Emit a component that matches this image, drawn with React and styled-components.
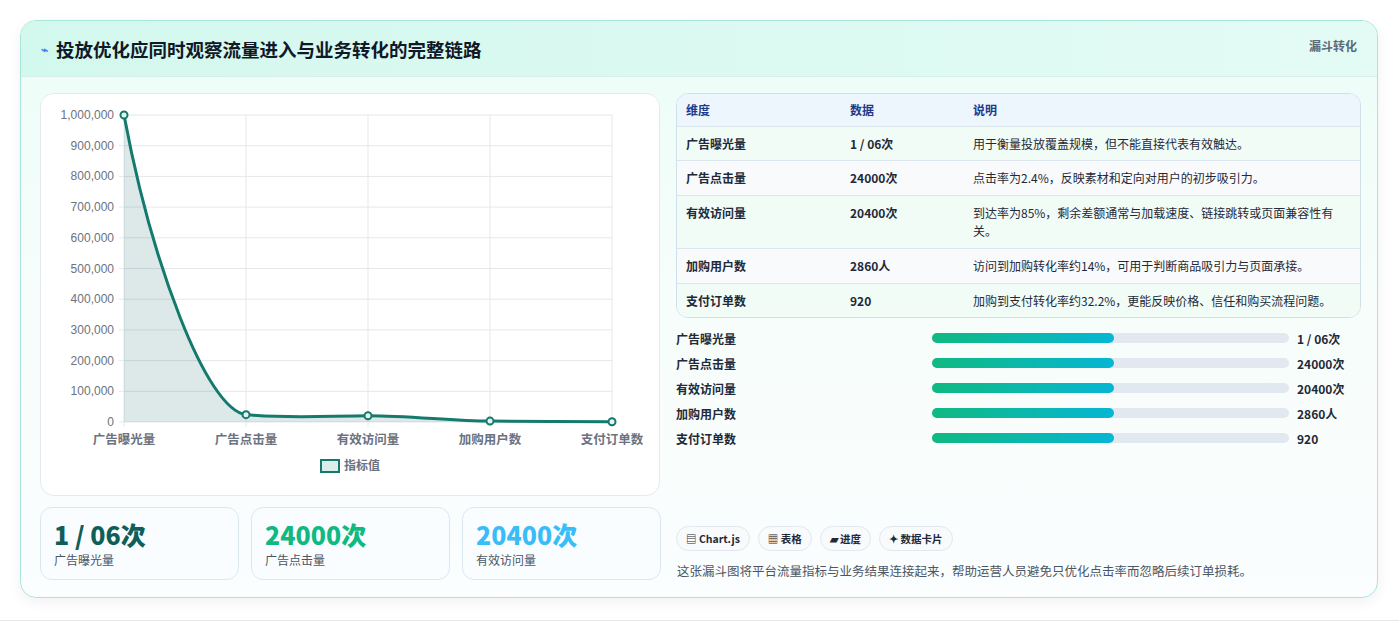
import React from "react";
import styled, { createGlobalStyle } from "styled-components";

const G = createGlobalStyle`
  body{margin:0;background:#f3f4f6;font-family:"Noto Sans CJK SC","Noto Sans",sans-serif;}
`;
const Page = styled.div`padding:20px 21px 22px 20px;background:#fff;height:621px;box-sizing:border-box;border-bottom:1px solid #e5e7eb;`;
const Card = styled.div`border:1px solid #a7e6dc;border-radius:16px;overflow:hidden;background:linear-gradient(180deg,#ecfdf7 0%,#f7fdfb 50%,#fbfdfe 100%);box-shadow:0 4px 14px rgba(0,0,0,.06);height:578px;box-sizing:border-box;`;
const Header = styled.div`height:55px;display:flex;align-items:center;justify-content:space-between;padding:0 20px 0 20px;background:linear-gradient(90deg,#d3f8ee,#e3fbf4);border-bottom:1px solid #d6efe9;`;
const Title = styled.h1`margin:0;font-size:18.5px;font-weight:700;color:#111827;display:flex;align-items:center;gap:8px;`;
const Tag = styled.span`font-size:12px;font-weight:700;color:#5b6b7a;align-self:flex-start;margin-top:16px;`;
const Body = styled.div`display:grid;grid-template-columns:620px 685px;gap:16px;padding:16px 18px 0 19px;`;
const Col = styled.div`display:flex;flex-direction:column;gap:11px;`;
const Panel = styled.div`background:#fff;border:1px solid #e3ebf0;border-radius:14px;height:403px;box-sizing:border-box;overflow:hidden;`;
const Stats = styled.div`display:grid;grid-template-columns:repeat(3,199px);gap:12px;`;
const Stat = styled.div`background:#fafdff;border:1px solid #dbe7ef;border-radius:12px;height:73px;box-sizing:border-box;padding:10px 13px;`;
const StatVal = styled.div`font-size:25px;font-weight:800;color:${p=>p.c};line-height:32px;`;
const StatLbl = styled.div`font-size:12px;color:#4b5563;margin-top:1px;`;
const Table = styled.div`border:1px solid #cfe0ea;border-radius:12px;overflow:hidden;background:#fff;`;
const Row = styled.div`display:grid;grid-template-columns:164px 123px 1fr;padding:0 9px;min-height:${p=>p.h}px;align-items:${p=>p.top?"start":"center"};background:${p=>p.head?"#edf5fd":p.alt?"#f8fafc":"#f2fcf7"};border-top:${p=>p.head?"none":"1px solid #dbe6ee"};font-size:12px;color:${p=>p.head?"#1e3a8a":"#1f2937"};font-weight:${p=>p.head?600:400};box-sizing:border-box;padding-top:${p=>p.top?"8px":0};line-height:18px;`;
const Bold = styled.span`font-weight:600;`;
const Bars = styled.div`display:flex;flex-direction:column;gap:7px;margin-top:11px;`;
const BarRow = styled.div`display:grid;grid-template-columns:256px 365px 1fr;align-items:center;font-size:12px;font-weight:600;color:#1f2937;height:18px;`;
const Track = styled.div`height:10px;background:#e2e8f0;border-radius:5px;margin-right:8px;`;
const Fill = styled.div`height:100%;background:linear-gradient(90deg,#10b981,#06b6d4);border-radius:5px;`;
const Val = styled.span`font-weight:700;`;
const Chips = styled.div`display:flex;gap:8px;margin-top:79px;`;
const Chip = styled.span`font-size:10.5px;font-weight:600;color:#1f2937;background:#f8fafc;border:1px solid #e2e8f0;border-radius:15px;padding:4px 9px;`;
const Note = styled.p`font-size:12.5px;color:#4b5563;margin:10px 0 0 1px;`;

const yl=[1000000,900000,800000,700000,600000,500000,400000,300000,200000,100000,0];
const xs=[123,245,367,489,611];
const labels=["广告曝光量","广告点击量","有效访问量","加购用户数","支付订单数"];
const vals=[1000000,24000,20400,2860,920];
const Y=v=>422-v/1e6*307;

function Chart(){
  const line="M123,115 C150,260 205,410 245,414.6 C290,419 330,415.7 367,415.7 C410,415.7 450,421 489,421.1 C530,421.4 570,421.7 611,421.7";
  return <svg width="619" height="403" viewBox="40 94 619 403" style={{display:"block"}}>
    {yl.map((v,i)=>{const y=115+i*30.7;return <g key={v}>
      <line x1="118" x2="611" y1={y} y2={y} stroke="#e5e7eb"/>
      <text x="113" y={y+4} fontSize="12" textAnchor="end" fill="#6b7280" fontFamily="Liberation Sans,sans-serif">{v.toLocaleString("en-US")}</text></g>})}
    {xs.map((x,i)=><g key={x}><line x1={x} x2={x} y1="115" y2="427" stroke="#e5e7eb"/>
      <text x={x} y="444" fontSize="12.5" textAnchor="middle" fill="#6b7280" fontWeight="600">{labels[i]}</text></g>)}
    <path d={line+" L611,422 L123,422 Z"} fill="rgba(17,110,100,0.15)"/>
    <path d={line} fill="none" stroke="#157a6e" strokeWidth="3"/>
    {xs.map((x,i)=><circle key={x} cx={x} cy={Y(vals[i])} r="3.5" fill="#e6f2f0" stroke="#157a6e" strokeWidth="2"/>)}
    <rect x="320" y="460" width="18" height="12" fill="#dcecea" stroke="#157a6e" strokeWidth="2"/>
    <text x="343" y="470" fontSize="12" fill="#6b7280" fontWeight="600">指标值</text>
  </svg>;
}

const rows=[["广告曝光量","1 / 06次","用于衡量投放覆盖规模，但不能直接代表有效触达。",34],["广告点击量","24000次","点击率为2.4%，反映素材和定向对用户的初步吸引力。",35,1],["有效访问量","20400次","到达率为85%，剩余差额通常与加载速度、链接跳转或页面兼容性有关。",53,0,1],["加购用户数","2860人","访问到加购转化率约14%，可用于判断商品吸引力与页面承接。",35,1],["支付订单数","920","加购到支付转化率约32.2%，更能反映价格、信任和购买流程问题。",34]];

export default function App(){
  return <Page><G/><Card>
    <Header><Title><span style={{color:"#3b82f6",fontSize:12}}>⌁</span>投放优化应同时观察流量进入与业务转化的完整链路</Title><Tag>漏斗转化</Tag></Header>
    <Body>
      <Col>
        <Panel><Chart/></Panel>
        <Stats>
          <Stat><StatVal c="#115e59">1 / 06次</StatVal><StatLbl>广告曝光量</StatLbl></Stat>
          <Stat><StatVal c="#10b981">24000次</StatVal><StatLbl>广告点击量</StatLbl></Stat>
          <Stat><StatVal c="#38bdf8">20400次</StatVal><StatLbl>有效访问量</StatLbl></Stat>
        </Stats>
      </Col>
      <div>
        <Table>
          <Row head h={32}><span>维度</span><span>数据</span><span>说明</span></Row>
          {rows.map(r=><Row key={r[0]} h={r[3]} alt={r[4]} top={r[5]}><Bold>{r[0]}</Bold><Bold>{r[1]}</Bold><span>{r[2]}</span></Row>)}
        </Table>
        <Bars>{rows.map(r=><BarRow key={r[0]}><span>{r[0]}</span><Track><Fill style={{width:"51%"}}/></Track><Val>{r[1]}</Val></BarRow>)}</Bars>
        <Chips><Chip>▤ Chart.js</Chip><Chip>▦ 表格</Chip><Chip>▰ 进度</Chip><Chip>✦ 数据卡片</Chip></Chips>
        <Note>这张漏斗图将平台流量指标与业务结果连接起来，帮助运营人员避免只优化点击率而忽略后续订单损耗。</Note>
      </div>
    </Body>
  </Card></Page>;
}
